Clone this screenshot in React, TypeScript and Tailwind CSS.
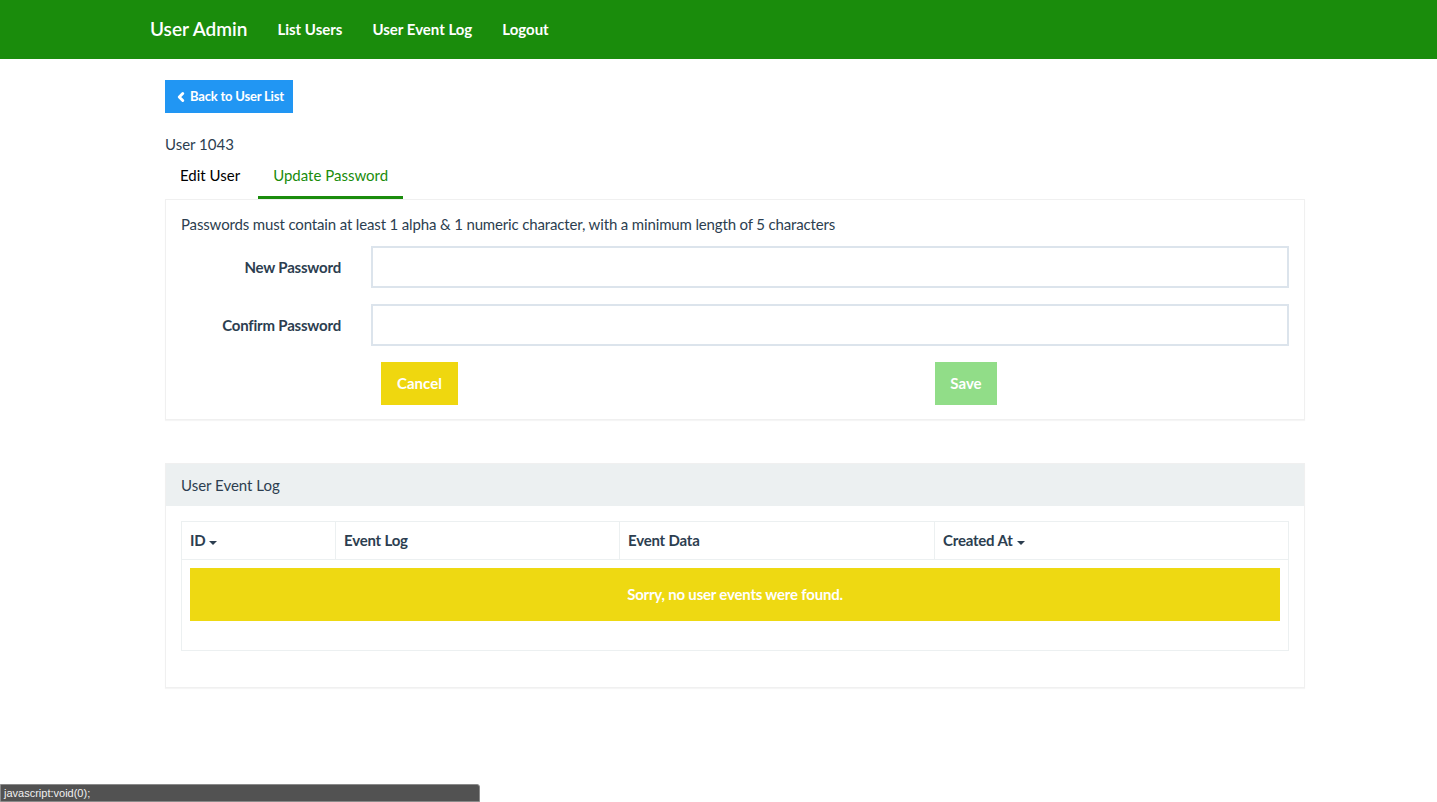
import { ChevronLeft } from 'lucide-react';

function SortCaret() {
  return <span className="ml-1 inline-block h-0 w-0 translate-y-[1px] border-x-[4px] border-t-[4px] border-x-transparent border-t-[#2c3e50] align-middle" />;
}

export default function App() {
  const columns = [
    { label: 'ID', sort: true, width: 'w-[154px]' },
    { label: 'Event Log', sort: false, width: 'w-[284px]' },
    { label: 'Event Data', sort: false, width: 'w-[315px]' },
    { label: 'Created At', sort: true, width: '' },
  ];

  return (
    <div className="min-h-[802px] bg-white text-[15px] text-[#2c3e50]" style={{ fontFamily: 'Lato, "Open Sans", sans-serif' }}>
      <nav className="h-[59px] bg-[#1a8c0c]">
        <div className="flex h-full items-center pl-[150px]">
          <span className="text-[19px] font-semibold text-white">User Admin</span>
          <ul className="ml-[15px] flex items-center">
            {['List Users', 'User Event Log', 'Logout'].map((l) => (
              <li key={l} className="px-[15px] text-[15px] font-bold text-white">{l}</li>
            ))}
          </ul>
        </div>
      </nav>

      <main className="ml-[165px] w-[1140px] pt-[21px]">
        <button className="flex h-[33px] items-center gap-[2px] bg-[#2196f3] pl-[9px] pr-[9px] text-[13px] font-bold tracking-[-0.2px] text-white">
          <ChevronLeft className="h-[14px] w-[14px]" strokeWidth={5} />
          Back to User List
        </button>

        <div className="mt-[21px] leading-[20px]">User 1043</div>

        <div className="flex">
          <div className="mr-[3px] flex h-[45px] items-center px-[15px] pb-[3px] text-black">Edit User</div>
          <div className="flex h-[45px] items-center border-b-[3px] border-[#1a8c0c] px-[15px] text-[#1a8c0c]">Update Password</div>
        </div>

        <section className="border border-[#f0f0f0] px-[15px] pb-[14px] pt-[14px] shadow-[0_1px_1px_rgba(0,0,0,0.04)]">
          <p className="mb-[11px] leading-[21px] tracking-[-0.15px]">Passwords must contain at least 1 alpha &amp; 1 numeric character, with a minimum length of 5 characters</p>
          {['New Password', 'Confirm Password'].map((l) => (
            <div key={l} className="mb-[16px] flex items-center">
              <label className="w-[160px] text-right font-bold tracking-[-0.2px]">{l}</label>
              <input type="password" className="ml-[30px] h-[42px] flex-1 border-2 border-[#dce4ec] outline-none" />
            </div>
          ))}
          <div className="flex pl-[200px]">
            <button className="h-[43px] w-[77px] bg-[#efd70f] font-bold text-white">Cancel</button>
            <button className="ml-[477px] h-[43px] w-[62px] bg-[#91dd88] font-bold text-white">Save</button>
          </div>
        </section>

        <section className="mt-[43px] border border-[#f0f0f0] shadow-[0_1px_1px_rgba(0,0,0,0.04)]">
          <div className="flex h-[42px] items-center bg-[#ecf0f1] px-[15px]">User Event Log</div>
          <div className="px-[15px] pb-[36px] pt-[15px]">
            <table className="w-full border-collapse border border-[#ecf0f1]">
              <thead>
                <tr className="h-[38px]">
                  {columns.map((c) => (
                    <th key={c.label} className={`${c.width} border border-[#ecf0f1] px-[8px] text-left font-bold tracking-[-0.2px]`}>
                      {c.label}
                      {c.sort && <SortCaret />}
                    </th>
                  ))}
                </tr>
              </thead>
              <tbody>
                <tr>
                  <td colSpan={4} className="px-[8px] pb-[29px] pt-[8px]">
                    <div className="flex h-[53px] items-center justify-center bg-[#eed912] font-bold tracking-[-0.2px] text-white">
                      Sorry, no user events were found.
                    </div>
                  </td>
                </tr>
              </tbody>
            </table>
          </div>
        </section>
      </main>

      <div className="fixed bottom-0 left-0 flex h-[18px] w-[480px] items-center rounded-tr-[3px] border border-[#8a8a8a] bg-[#525252] px-[3px] text-[11px] text-[#f0f0f0]" style={{ fontFamily: '"Liberation Sans", Arial, sans-serif' }}>
        javascript:void(0);
      </div>
    </div>
  );
}
